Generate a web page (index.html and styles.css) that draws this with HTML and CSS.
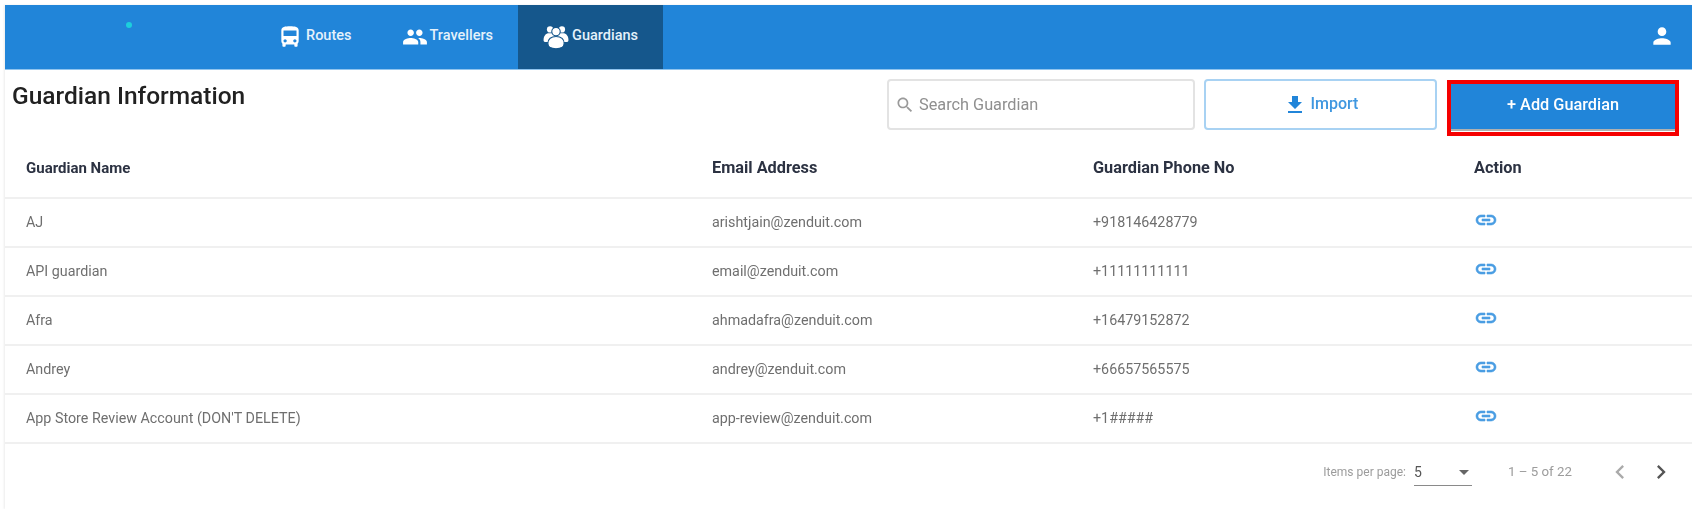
FILE: index.html
```html
<!DOCTYPE html>
<html>
<head>
    <meta charset="UTF-8">
    <title>Guardian Information</title>
    <link rel="stylesheet" href="styles.css">
</head>
<body>
    <div class="container">
        <div class="topbar">
            <div class="logo-dot"></div>
            <div class="nav">
                <a class="nav-item nav-routes">
                    <svg class="nav-icon" viewBox="0 0 24 24"><path d="M4 16c0 .88.39 1.67 1 2.22V20c0 .55.45 1 1 1h1c.55 0 1-.45 1-1v-1h8v1c0 .55.45 1 1 1h1c.55 0 1-.45 1-1v-1.78c.61-.55 1-1.34 1-2.22V6c0-3.5-3.58-4-8-4s-8 .5-8 4v10zm3.5 1c-.83 0-1.5-.67-1.5-1.5S6.67 14 7.5 14s1.5.67 1.5 1.5S8.33 17 7.5 17zm9 0c-.83 0-1.5-.67-1.5-1.5s.67-1.5 1.5-1.5 1.5.67 1.5 1.5-.67 1.5-1.5 1.5zm1.5-6H6V6h12v5z"/></svg>
                    <span class="nav-text">Routes</span>
                </a>
                <a class="nav-item nav-travellers">
                    <svg class="nav-icon" viewBox="0 0 24 24"><path d="M16 11c1.66 0 2.99-1.34 2.99-3S17.66 5 16 5c-1.66 0-3 1.34-3 3s1.34 3 3 3zm-8 0c1.66 0 2.99-1.34 2.99-3S9.66 5 8 5C6.34 5 5 6.34 5 8s1.34 3 3 3zm0 2c-2.33 0-7 1.17-7 3.5V19h14v-2.5c0-2.33-4.67-3.5-7-3.5zm8 0c-.29 0-.62.02-.97.05 1.16.84 1.97 1.97 1.97 3.45V19h6v-2.5c0-2.33-4.67-3.5-7-3.5z"/></svg>
                    <span class="nav-text">Travellers</span>
                </a>
                <a class="nav-item nav-guardians active">
                    <svg class="nav-icon" viewBox="0 0 24 24">
                        <circle cx="6.500" cy="5" r="2.900"/>
                        <circle cx="17.500" cy="5" r="2.900"/>
                        <path d="M.5 15c0-4 2-6.500 5-6.500h13c3 0 5 2.500 5 6.500 0 .8-.5 1.500-1.300 1.500H1.800C1 16.500.5 15.800.5 15z"/>
                        <circle class="guardian-front" cx="12" cy="7" r="3.900"/>
                        <path class="guardian-front" d="M4.500 18c0-4.200 3-6.500 7.500-6.500s7.500 2.300 7.500 6.500c0 2.800-3 4.800-7.500 4.800s-7.500-2-7.500-4.800z"/>
                    </svg>
                    <span class="nav-text">Guardians</span>
                </a>
            </div>
            <svg class="user-icon" viewBox="0 0 24 24"><path d="M12 12c2.210 0 4-1.790 4-4s-1.790-4-4-4-4 1.790-4 4 1.790 4 4 4zm0 2c-2.670 0-8 1.340-8 4v2h16v-2c0-2.660-5.330-4-8-4z"/></svg>
        </div>

        <div class="toolbar">
            <h1>Guardian Information</h1>
            <div class="toolbar-actions">
                <div class="search">
                    <svg class="search-icon" viewBox="0 0 24 24"><path d="M15.500 14h-.79l-.28-.27C15.410 12.590 16 11.110 16 9.500 16 5.910 13.090 3 9.500 3S3 5.910 3 9.500 5.910 16 9.500 16c1.610 0 3.090-.59 4.230-1.570l.27.28v.79l5 4.990L20.490 19l-4.990-5zm-6 0C7.010 14 5 11.990 5 9.500S7.010 5 9.500 5 14 7.010 14 9.500 11.990 14 9.500 14z"/></svg>
                    Search Guardian
                </div>
                <button class="btn btn-import">
                    <svg class="import-icon" viewBox="0 0 24 24"><path d="M19 9h-4V3H9v6H5l7 7 7-7zM5 18v2h14v-2H5z"/></svg>
                    Import
                </button>
                <div class="highlight">
                    <button class="btn btn-add">+ Add Guardian</button>
                </div>
            </div>
        </div>

        <table class="guardian-table">
            <thead>
                <tr>
                    <th class="col-name">Guardian Name</th>
                    <th class="col-email">Email Address</th>
                    <th class="col-phone">Guardian Phone No</th>
                    <th class="col-action">Action</th>
                </tr>
            </thead>
            <tbody>
                <tr>
                    <td>AJ</td>
                    <td>arishtjain@zenduit.com</td>
                    <td>+918146428779</td>
                    <td><svg class="link-icon" viewBox="0 0 24 24"><path d="M3.900 12c0-1.710 1.390-3.100 3.100-3.100h4V7H7c-2.760 0-5 2.240-5 5s2.240 5 5 5h4v-1.900H7c-1.710 0-3.100-1.390-3.100-3.100zM8 13h8v-2H8v2zm9-6h-4v1.900h4c1.710 0 3.100 1.390 3.100 3.100s-1.390 3.100-3.100 3.100h-4V17h4c2.760 0 5-2.240 5-5s-2.240-5-5-5z"/></svg></td>
                </tr>
                <tr>
                    <td>API guardian</td>
                    <td>email@zenduit.com</td>
                    <td>+11111111111</td>
                    <td><svg class="link-icon" viewBox="0 0 24 24"><path d="M3.900 12c0-1.710 1.390-3.100 3.100-3.100h4V7H7c-2.760 0-5 2.240-5 5s2.240 5 5 5h4v-1.900H7c-1.710 0-3.100-1.390-3.100-3.100zM8 13h8v-2H8v2zm9-6h-4v1.900h4c1.710 0 3.100 1.390 3.100 3.100s-1.390 3.100-3.100 3.100h-4V17h4c2.760 0 5-2.240 5-5s-2.240-5-5-5z"/></svg></td>
                </tr>
                <tr>
                    <td>Afra</td>
                    <td>ahmadafra@zenduit.com</td>
                    <td>+16479152872</td>
                    <td><svg class="link-icon" viewBox="0 0 24 24"><path d="M3.900 12c0-1.710 1.390-3.100 3.100-3.100h4V7H7c-2.760 0-5 2.240-5 5s2.240 5 5 5h4v-1.900H7c-1.710 0-3.100-1.390-3.100-3.100zM8 13h8v-2H8v2zm9-6h-4v1.900h4c1.710 0 3.100 1.390 3.100 3.100s-1.390 3.100-3.100 3.100h-4V17h4c2.760 0 5-2.240 5-5s-2.240-5-5-5z"/></svg></td>
                </tr>
                <tr>
                    <td>Andrey</td>
                    <td>andrey@zenduit.com</td>
                    <td>+66657565575</td>
                    <td><svg class="link-icon" viewBox="0 0 24 24"><path d="M3.900 12c0-1.710 1.390-3.100 3.100-3.100h4V7H7c-2.760 0-5 2.240-5 5s2.240 5 5 5h4v-1.900H7c-1.710 0-3.100-1.390-3.100-3.100zM8 13h8v-2H8v2zm9-6h-4v1.900h4c1.710 0 3.100 1.390 3.100 3.100s-1.390 3.100-3.100 3.100h-4V17h4c2.760 0 5-2.240 5-5s-2.240-5-5-5z"/></svg></td>
                </tr>
                <tr>
                    <td>App Store Review Account (DON'T DELETE)</td>
                    <td>app-review@zenduit.com</td>
                    <td>+1#####</td>
                    <td><svg class="link-icon" viewBox="0 0 24 24"><path d="M3.900 12c0-1.710 1.390-3.100 3.100-3.100h4V7H7c-2.760 0-5 2.240-5 5s2.240 5 5 5h4v-1.900H7c-1.710 0-3.100-1.390-3.100-3.100zM8 13h8v-2H8v2zm9-6h-4v1.900h4c1.710 0 3.100 1.390 3.100 3.100s-1.390 3.100-3.100 3.100h-4V17h4c2.760 0 5-2.240 5-5s-2.240-5-5-5z"/></svg></td>
                </tr>
            </tbody>
        </table>

        <div class="pager">
            <span class="pager-label">Items per page:</span>
            <div class="pager-select">
                <span>5</span>
                <span class="pager-caret"></span>
            </div>
            <span class="pager-range">1 – 5 of 22</span>
            <svg class="pager-arrow prev" viewBox="0 0 24 24"><path d="M15.410 7.410L14 6l-6 6 6 6 1.410-1.410L10.830 12z"/></svg>
            <svg class="pager-arrow next" viewBox="0 0 24 24"><path d="M10 6L8.590 7.410 13.170 12l-4.580 4.590L10 18l6-6z"/></svg>
        </div>
    </div>
</body>
</html>
```

FILE: styles.css
```css
html, body {
    margin: 0;
    padding: 0;
    background: #fff;
}

body {
    font-family: Roboto, "Liberation Sans", sans-serif;
    color: #212121;
    overflow: hidden;
}

.container {
    height: 504px;
    margin: 5px 0 0 5px;
    box-shadow: -1px 0 2px rgba(0, 0, 0, 0.08);
    filter: blur(0.7px);
}

.topbar {
    display: flex;
    align-items: center;
    height: 65px;
    background: #2185d9;
    border-bottom: 1px solid #90c4ee;
    box-sizing: border-box;
    padding-right: 17px;
}

.logo-dot {
    width: 6px;
    height: 6px;
    border-radius: 50%;
    background: #1ccfdc;
    margin: -24px 0 0 121px;
}

.nav {
    display: flex;
    align-self: stretch;
    margin-left: 121px;
    flex: 1;
}

.nav-item {
    display: flex;
    align-items: center;
    gap: 3px;
    color: #fff;
    font-size: 14.500px;
    font-weight: 500;
    padding: 0 25px;
}

.nav-text {
    margin-top: -3px;
    color: #e4f1fb;
}

.nav-routes {
    padding: 0 25px 0 24px;
}

.nav-travellers {
    gap: 1px;
    padding-left: 26px;
}

.nav-item.active {
    background: #15578c;
}

.nav-icon {
    width: 26px;
    height: 26px;
    fill: #fff;
}

.guardian-front {
    stroke: #15578c;
    stroke-width: 1;
}

.user-icon {
    width: 26px;
    height: 26px;
    fill: #fff;
    margin-top: -2px;
}

.toolbar {
    display: flex;
    justify-content: space-between;
    height: 70px;
    padding: 9px 13px 0 7px;
    box-sizing: border-box;
}

.toolbar h1 {
    margin: 2px 0 0 0;
    font-size: 24.500px;
    font-weight: 500;
    color: #212121;
}

.toolbar-actions {
    display: flex;
    align-items: flex-start;
    gap: 9px;
}

.search {
    display: flex;
    align-items: center;
    width: 308px;
    height: 51px;
    box-sizing: border-box;
    border: 2px solid #e3e3e3;
    border-radius: 4px;
    padding-left: 6px;
    font-size: 16.300px;
    color: #8f8f8f;
}

.search-icon {
    width: 20px;
    height: 20px;
    fill: #9a9a9a;
    margin-right: 4px;
}

.btn {
    font-family: inherit;
    font-size: 16px;
    font-weight: 500;
    cursor: pointer;
}

.btn-import {
    display: flex;
    align-items: center;
    justify-content: center;
    gap: 4px;
    width: 233px;
    height: 51px;
    background: #fff;
    color: #3f97e0;
    border: 2px solid #a8d2f3;
    border-radius: 4px;
    padding: 0 0 2px 0;
}

.import-icon {
    width: 24px;
    height: 24px;
    fill: #2185d9;
    margin-top: 2px;
}

.highlight {
    margin-left: 1px;
    border: 4px solid #f50000;
    box-sizing: border-box;
    width: 232px;
    height: 56px;
    margin-top: 1px;
}

.btn-add {
    display: block;
    width: 100%;
    height: 47px;
    background: #2185d9;
    color: #fff;
    border: none;
    border-bottom: 2px solid #b0b0b0;
    font-size: 16.300px;
    padding: 0 0 5px 0;
}

.guardian-table {
    width: 100%;
    border-collapse: collapse;
    table-layout: fixed;
}

.guardian-table th, .guardian-table td {
    text-align: left;
    padding: 0 0 2px 0;
    border-bottom: 2px solid #f0f0f0;
}

.guardian-table th {
    height: 55px;
    font-size: 16.300px;
    font-weight: 700;
    color: #2c3242;
}

.guardian-table td {
    height: 45px;
    font-size: 14.300px;
    color: #6f6f6f;
}

.guardian-table th:first-child, .guardian-table td:first-child {
    padding-left: 21px;
}

.guardian-table .col-name {
    width: 686px;
    font-size: 15px;
}

.col-email, .col-phone {
    width: 381px;
}

.link-icon {
    display: block;
    width: 24px;
    height: 24px;
    fill: #4a9de3;
    stroke: #4a9de3;
    stroke-width: 0.6;
    margin-top: -3px;
}

.pager {
    display: flex;
    align-items: center;
    height: 55px;
    justify-content: flex-end;
    padding-right: 17px;
    font-size: 12px;
    color: #9c9c9c;
}

.pager-label {
    margin-right: 8px;
}

.pager-select {
    display: flex;
    align-items: center;
    justify-content: space-between;
    width: 58px;
    height: 26px;
    border-bottom: 1px solid #8a8a8a;
    box-sizing: border-box;
    font-size: 14px;
    color: #555;
    margin-top: 2px;
}

.pager-caret {
    width: 0;
    height: 0;
    border-left: 5px solid transparent;
    border-right: 5px solid transparent;
    border-top: 5px solid #666;
    margin-right: 3px;
}

.pager-range {
    margin-left: 36px;
    margin-right: 34px;
    font-size: 13.300px;
}

.pager-arrow {
    width: 28px;
    height: 28px;
}

.prev {
    fill: #aaa;
    margin-right: 13px;
}

.next {
    fill: #555;
}
```
